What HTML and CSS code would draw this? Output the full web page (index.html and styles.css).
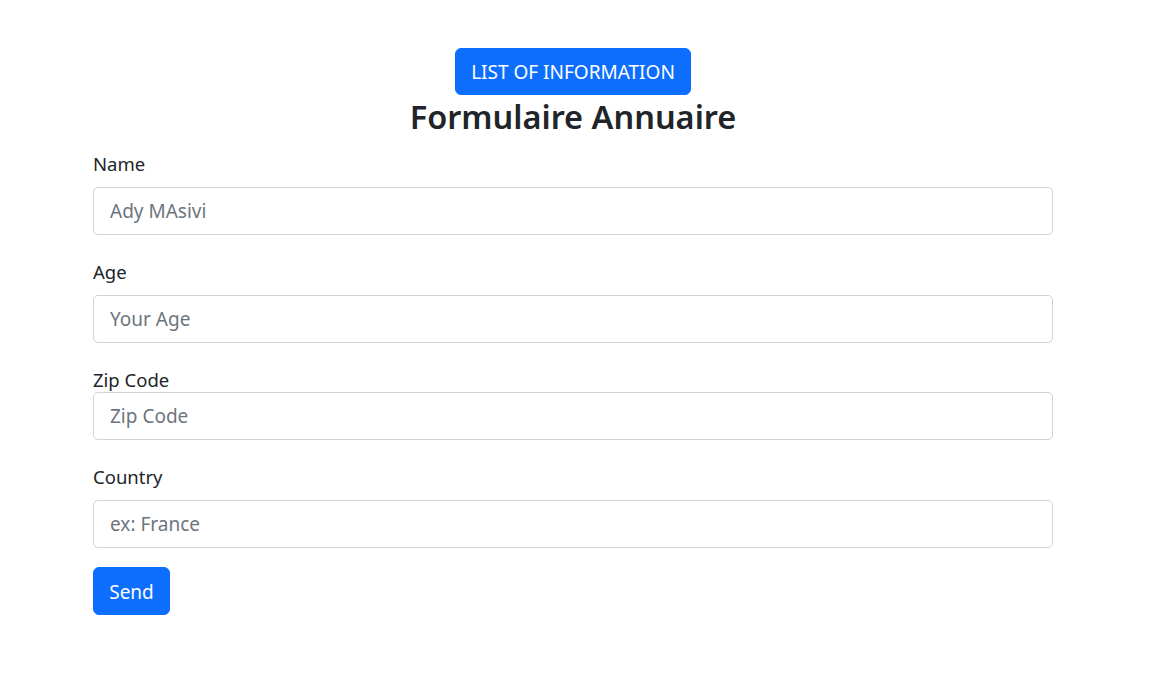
FILE: index.html
```html
<!DOCTYPE html>
<html lang="fr">
<head>
<meta charset="utf-8">
<title>Formulaire Annuaire</title>
<link rel="stylesheet" href="styles.css">
</head>
<body>
<div class="page">
  <div class="top">
    <button class="btn btn-list" type="button">LIST OF INFORMATION</button>
    <h1 class="title">Formulaire Annuaire</h1>
  </div>
  <form class="form">
    <div class="field">
      <label class="label" for="name">Name</label>
      <input class="input" id="name" type="text" placeholder="Ady MAsivi">
    </div>
    <div class="field">
      <label class="label" for="age">Age</label>
      <input class="input" id="age" type="text" placeholder="Your Age">
    </div>
    <div class="field field-tight">
      <label class="label" for="zip">Zip Code</label>
      <input class="input" id="zip" type="text" placeholder="Zip Code">
    </div>
    <div class="field">
      <label class="label" for="country">Country</label>
      <input class="input" id="country" type="text" placeholder="ex: France">
    </div>
    <div class="actions">
      <button class="btn btn-send" type="submit">Send</button>
    </div>
  </form>
</div>
</body>
</html>
```

FILE: styles.css
```css
* { box-sizing: border-box; }
html, body { margin: 0; padding: 0; background: #fff; }
body {
  font-family: "Noto Sans", "Open Sans", "Liberation Sans", sans-serif;
  color: #212529;
}
.page {
  width: 960px;
  margin-left: 93px;
  padding-top: 48px;
}
.top {
  display: flex;
  flex-direction: column;
  align-items: center;
}
.btn {
  font-family: inherit;
  background: #0d6efd;
  color: #fff;
  border: 1px solid #0d6efd;
  border-radius: 6px;
  font-size: 19px;
  line-height: 27px;
  height: 47px;
  padding: 2px 0 0;
  cursor: pointer;
}
.btn-list { width: 236px; }
.title {
  margin: 0;
  font-size: 32.5px;
  font-weight: 600;
  line-height: 44px;
  height: 57px;
  padding-top: 0;
}
.form { display: flex; flex-direction: column; }
.field { display: flex; flex-direction: column; margin-bottom: 25px; }
.label {
  font-size: 18.5px;
  line-height: 23px;
  margin-bottom: 12px;
}
.field-tight .label { margin-bottom: 1px; }
.input {
  font-family: inherit;
  height: 48px;
  border: 1px solid #ced4da;
  border-radius: 5px;
  padding: 0 16px;
  font-size: 19px;
  color: #212529;
  width: 100%;
}
.input::placeholder { color: #6c757d; }
.actions { margin-top: -6px; }
.btn-send { width: 77px; height: 48px; }
```
